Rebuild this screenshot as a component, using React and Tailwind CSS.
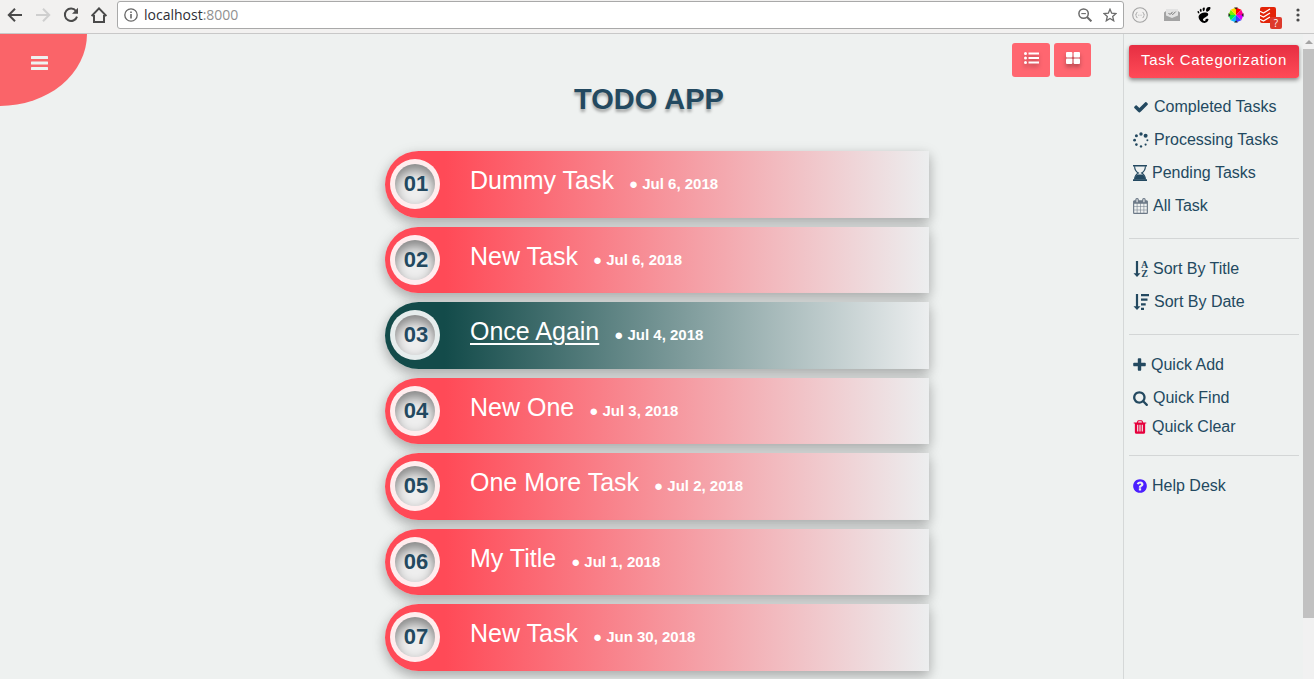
import React from "react";
import { SiGnome } from "react-icons/si";

const tasks = [
  { title: "Dummy Task", date: "Jul 6, 2018" },
  { title: "New Task", date: "Jul 6, 2018" },
  { title: "Once Again", date: "Jul 4, 2018", active: true },
  { title: "New One", date: "Jul 3, 2018" },
  { title: "One More Task", date: "Jul 2, 2018" },
  { title: "My Title", date: "Jul 1, 2018" },
  { title: "New Task", date: "Jun 30, 2018" },
];

function Glyph({ d, x = 0, w = 1792, className = "" }) {
  return (
    <svg aria-hidden="true" viewBox={`${x} 0 ${w} 1792`} className={`h-4 shrink-0 fill-current ${className}`}>
      <path d={d} />
    </svg>
  );
}

const CheckIcon = () => (
  <Glyph className="w-4" d="M1671 566q0 40-28 68l-724 724-136 136q-28 28-68 28t-68-28l-136-136-362-362q-28-28-28-68t28-68l136-136q28-28 68-28t68 28l294 295 656-657q28-28 68-28t68 28l136 136q28 28 28 68z" />
);

const SpinnerIcon = () => (
  <svg aria-hidden="true" viewBox="0 0 16 16" className="size-4 shrink-0 fill-current">
    <circle cx="8" cy="2" r="1.7" />
    <circle cx="12.6" cy="3.8" r="2" />
    <circle cx="14.4" cy="8.2" r="1" />
    <circle cx="12.6" cy="12.6" r="1.1" />
    <circle cx="8" cy="14.4" r="1.2" />
    <circle cx="3.4" cy="12.6" r="1.3" />
    <circle cx="1.6" cy="8.2" r="1.4" />
    <circle cx="3.4" cy="3.8" r="1.5" />
  </svg>
);

const HourglassIcon = () => (
  <svg aria-hidden="true" viewBox="0 0 14 16" className="h-4 w-3.5 shrink-0 fill-current">
    <path d="M0 0h14v1.5H0zM0 14.2h14v1.8H0z" />
    <path d="M1.6 1.2c0 3.6 1.6 5.6 3.8 6.8-2.2 1.2-3.8 3.2-3.8 6.6M12.4 1.2c0 3.6-1.6 5.6-3.8 6.8 2.2 1.2 3.8 3.2 3.8 6.6" className="fill-none stroke-current" strokeWidth="1.1" />
    <path d="M1.6 14.4c.2-2.1 1-3.6 2.6-5h5.6c1.600 1.400 2.400 2.900 2.600 5z" />
  </svg>
);

const CalendarIcon = () => (
  <Glyph className="w-[15px] text-[#6c7987]" x={64} w={1664} d="M192 1664h288v-288h-288v288zm352 0h320v-288h-320v288zm-352-352h288v-320h-288v320zm352 0h320v-320h-320v320zm-352-384h288v-288h-288v288zm736 736h320v-288h-320v288zm-384-736h320v-288h-320v288zm768 736h288v-288h-288v288zm-384-352h320v-320h-320v320zm-352-864v-288q0-13-9.5-22.5t-22.5-9.5h-64q-13 0-22.5 9.5t-9.5 22.5v288q0 13 9.5 22.5t22.5 9.5h64q13 0 22.5-9.5t9.5-22.5zm736 864h288v-320h-288v320zm-384-384h320v-288h-320v288zm384 0h288v-288h-288v288zm32-480v-288q0-13-9.5-22.5t-22.5-9.5h-64q-13 0-22.5 9.5t-9.5 22.5v288q0 13 9.5 22.5t22.5 9.5h64q13 0 22.5-9.5t9.5-22.5zm384-64v1280q0 52-38 90t-90 38h-1408q-52 0-90-38t-38-90v-1280q0-52 38-90t90-38h128v-96q0-66 47-113t113-47h64q66 0 113 47t47 113v96h384v-96q0-66 47-113t113-47h64q66 0 113 47t47 113v96h128q52 0 90 38t38 90z" />
);

const SortTitleIcon = () => (
  <svg aria-hidden="true" viewBox="0 0 15 16" className="h-4 w-[15px] shrink-0 overflow-visible fill-current">
    <path d="M2.9 0h2.200v12.200h2.400L4 16 .5 12.200h2.400z" />
    <text x="11.500" y="7" textAnchor="middle" className="font-['Liberation_Serif',serif] text-[10px] font-bold">A</text>
    <text x="11.500" y="16" textAnchor="middle" className="font-['Liberation_Serif',serif] text-[10px] font-bold">Z</text>
  </svg>
);

const SortDateIcon = () => (
  <svg aria-hidden="true" viewBox="0 0 16 16" className="size-4 shrink-0 fill-current">
    <path d="M2.9 0h2.200v12.200h2.400L4 16 .5 12.200h2.400zM8 0h8v2.200H8zM8 4.600h6.500v2.200H8zM8 9.200h4.700v2.200H8zM8 13.800h3V16H8z" />
  </svg>
);

const PlusIcon = () => (
  <Glyph className="w-[13px]" x={192} w={1408} d="M1600 736v192q0 40-28 68t-68 28h-416v416q0 40-28 68t-68 28h-192q-40 0-68-28t-28-68v-416h-416q-40 0-68-28t-28-68v-192q0-40 28-68t68-28h416v-416q0-40 28-68t68-28h192q40 0 68 28t28 68v416h416q40 0 68 28t28 68z" />
);

const SearchIcon = () => (
  <Glyph className="w-[15px]" x={64} w={1664} d="M1216 832q0-185-131.5-316.5t-316.5-131.5-316.5 131.5-131.5 316.5 131.5 316.5 316.5 131.5 316.5-131.5 131.5-316.5zm512 832q0 52-38 90t-90 38q-54 0-90-38l-343-342q-179 124-399 124-143 0-273.5-55.5t-225-150-150-225-55.5-273.5 55.5-273.5 150-225 225-150 273.5-55.5 273.5 55.5 225 150 150 225 55.5 273.5q0 220-124 399l343 343q37 37 37 90z" />
);

const TrashIcon = () => (
  <Glyph className="w-3.5 text-[#e6003c]" x={128} w={1536} d="M704 1376v-704q0-14-9-23t-23-9h-64q-14 0-23 9t-9 23v704q0 14 9 23t23 9h64q14 0 23-9t9-23zm256 0v-704q0-14-9-23t-23-9h-64q-14 0-23 9t-9 23v704q0 14 9 23t23 9h64q14 0 23-9t9-23zm256 0v-704q0-14-9-23t-23-9h-64q-14 0-23 9t-9 23v704q0 14 9 23t23 9h64q14 0 23-9t9-23zm-544-992h448l-48-117q-7-9-17-11h-317q-10 2-17 11zm928 32v64q0 14-9 23t-23 9h-96v948q0 83-47 143.5t-113 60.5h-832q-66 0-113-58.5t-47-141.5v-952h-96q-14 0-23-9t-9-23v-64q0-14 9-23t23-9h309l70-167q15-37 54-63t79-26h320q40 0 79 26t54 63l70 167h309q14 0 23 9t9 23z" />
);

const HelpIcon = () => (
  <Glyph className="w-3.5 text-[#4b1fff]" x={128} w={1536} d="M1024 1376v-192q0-14-9-23t-23-9h-192q-14 0-23 9t-9 23v192q0 14 9 23t23 9h192q14 0 23-9t9-23zm256-672q0-88-55.5-163t-138.5-116-170-41q-243 0-371 213-15 24 8 42l132 100q7 6 19 6 16 0 25-12 53-68 86-92 34-24 86-24 48 0 85.5 26t37.5 59q0 38-20 61t-68 45q-63 28-115.5 86.5t-52.5 125.5v36q0 14 9 23t23 9h192q14 0 23-9t9-23q0-19 21.5-49.5t54.5-49.5q32-18 49-28.5t46-35 44.5-48 28-60.5 12.5-81zm384 192q0 209-103 385.5t-279.5 279.5-385.5 103-385.5-103-279.5-279.5-103-385.5 103-385.5 279.5-279.5 385.5-103 385.5 103 279.5 279.5 103 385.5z" />
);

const groups = [
  [
    { label: "Completed Tasks", Icon: CheckIcon },
    { label: "Processing Tasks", Icon: SpinnerIcon },
    { label: "Pending Tasks", Icon: HourglassIcon },
    { label: "All Task", Icon: CalendarIcon },
  ],
  [
    { label: "Sort By Title", Icon: SortTitleIcon },
    { label: "Sort By Date", Icon: SortDateIcon },
  ],
  [
    { label: "Quick Add", Icon: PlusIcon },
    { label: "Quick Find", Icon: SearchIcon, tight: true },
    { label: "Quick Clear", Icon: TrashIcon, tight: true },
  ],
  [{ label: "Help Desk", Icon: HelpIcon }],
];

function BrowserBar() {
  return (
    <header className="flex h-[34px] shrink-0 items-center border-b border-[#c8c8c8] bg-[#f2f1f0] pr-3.5 pb-[3px]">
      <nav aria-label="Browser" className="flex items-center gap-3 pl-[7px] pr-2.5 text-[#4a4a4a]">
        <button type="button" aria-label="Back">
          <svg viewBox="0 0 16 16" className="size-4 fill-none stroke-current" strokeWidth="2"><path d="M15 8H2M8 1.8 1.8 8 8 14.2" /></svg>
        </button>
        <button type="button" aria-label="Forward" className="text-[#cfcfcf]">
          <svg viewBox="0 0 16 16" className="size-4 fill-none stroke-current" strokeWidth="2"><path d="M1 8h13M8 1.8 14.2 8 8 14.2" /></svg>
        </button>
        <button type="button" aria-label="Reload">
          <svg viewBox="0 0 16 16" className="size-4 fill-none stroke-current" strokeWidth="2"><path d="M13 4A6.2 6.2 0 1 0 14 9.6" /><path d="M15 .8v6H9z" className="fill-current stroke-none" /></svg>
        </button>
        <button type="button" aria-label="Home">
          <svg viewBox="0 0 16 16" className="size-4 fill-none stroke-current" strokeWidth="2"><path d="M.6 9 8 1.4 15.4 9M3 8v7h10V8" /></svg>
        </button>
      </nav>
      <div className="flex h-7 min-w-0 flex-1 items-center rounded-[3px] border border-[#a9a9a9] bg-white px-1.5">
        <svg aria-hidden="true" viewBox="0 0 14 14" className="size-3.5 shrink-0 fill-none stroke-[#666]" strokeWidth="1.3">
          <circle cx="7" cy="7" r="6.2" />
          <path d="M7 6v4.4M7 3.4v1.5" strokeWidth="1.6" />
        </svg>
        <span className="flex-1 pl-1.5 font-['Open_Sans',sans-serif] text-[14px] leading-5 text-[#2e2e36]" role="textbox" aria-label="Address" tabIndex={0}>
          localhost<span className="text-[#909090]">:8000</span>
        </span>
        <span className="flex gap-[11px] text-[#6b6b6b]">
          <svg aria-hidden="true" viewBox="0 0 14 14" className="size-3.5 fill-none stroke-current" strokeWidth="1.5"><circle cx="5.6" cy="5.6" r="4.7" /><path d="M3.3 5.6h4.600" strokeWidth="1.1" /><path d="m9 9 4.400 4.400" strokeWidth="2" /></svg>
          <svg aria-hidden="true" viewBox="0 0 14 14" className="size-3.5 fill-none stroke-current" strokeWidth="1.3"><path d="m7 1.200 1.700 4 4.300.4-3.300 2.800 1 4.400L7 10.500l-3.700 2.300 1-4.400L1 5.600l4.300-.4z" /></svg>
        </span>
      </div>
      <div className="flex items-center gap-4 pl-2">
        <svg aria-hidden="true" viewBox="0 0 16 16" className="size-4 fill-none stroke-[#a3a3a3]"><circle cx="8" cy="8" r="7.3" strokeWidth="1.1" /><path d="M5.4 5.4q-1 0-1 1t-.9 1.6q.9.5.9 1.6t1 1M10.6 5.4q1 0 1 1t.9 1.6q-.9.5-.9 1.6t-1 1M6.400 8.200h.9M8.600 8.200h.9" /></svg>
        <svg aria-hidden="true" viewBox="0 0 16 14" className="h-3.5 w-4"><path d="M0 4.500 2 3V1h12v2l2 1.500V13H0z" fill="#a3a3a3" /><path d="M2 1h12v6.500L8 10 2 7.500z" fill="#e2e2e2" /><path d="m4.500 5 1.500 1.500 2.700-2.700M7.500 5.400l1.200 1.200 3-3" fill="none" stroke="#777" /></svg>
        <SiGnome aria-hidden="true" className="size-4 text-black" />
        <svg aria-hidden="true" viewBox="-8 -8 16 16" className="size-4">
          <path d="M0 0V-7.500L5.300-5.300z" fill="#f00" />
          <path d="M0 0 5.300-5.300 7.500 0z" fill="#ff0090" />
          <path d="M0 0H7.500L5.300 5.300z" fill="#d400ff" />
          <path d="M0 0 5.300 5.300 0 7.500z" fill="#3c3cff" />
          <path d="M0 0V7.500L-5.300 5.300z" fill="#10b8ff" />
          <path d="M0 0-5.300 5.300-7.500 0z" fill="#00f04a" />
          <path d="M0 0H-7.500L-5.300-5.300z" fill="#7cf000" />
          <path d="M0 0-5.300-5.300 0-7.500z" fill="#ffd800" />
          <path d="M-2-7.500H2L0-5.500zM-2 7.500H2L0 5.500zM-7.500-2V2L-5.500 0zM7.500-2V2L5.500 0z" fill="#222" />
        </svg>
        <span className="relative block size-4 rounded-xs bg-[#e32408]">
          <svg aria-hidden="true" viewBox="0 0 16 16" className="size-4 fill-none stroke-white" strokeWidth="1.3"><path d="m0 4.300 3.500 1.700 6.500-4M0 8.300l3.500 1.700L10 6M0 12.300 3.500 14l6.500-4" /></svg>
          <span className="absolute top-2.5 left-2.5 h-3 w-3 rounded-xs bg-[#dd3a2c] text-center font-['Open_Sans',sans-serif] text-[10px] leading-3 text-white">?</span>
        </span>
        <button type="button" aria-label="Browser menu" className="pl-1">
          <svg viewBox="0 0 4 16" className="h-4 w-1 fill-[#4a4a4a]"><circle cx="2" cy="3" r="1.600" /><circle cx="2" cy="8" r="1.600" /><circle cx="2" cy="13" r="1.600" /></svg>
        </button>
      </div>
    </header>
  );
}

function Task({ task, index }) {
  return (
    <li
      className={`flex items-start gap-[30px] rounded-l-full pt-2 pl-[5px] odd:h-[67px] even:h-[66px] shadow-[0_5px_11px_0_rgba(0,0,0,0.18),0_4px_15px_0_rgba(0,0,0,0.15)] ${task.active ? "bg-[linear-gradient(to_right,#134b4a_11%,#eceeef)]" : "bg-[linear-gradient(to_right,#ff4a57_11%,#eceeef)]"}`}
    >
      <span className="flex size-[50px] shrink-0 items-center justify-center rounded-full bg-white/90 p-[5px]">
        <span className="flex size-full items-center justify-center rounded-full bg-[#eeeeee] pl-0.5 text-[22px] leading-6 font-bold text-[#234960] shadow-[inset_0_6px_12px_0_rgba(0,0,0,0.45)]">
          {String(index + 1).padStart(2, "0")}
        </span>
      </span>
      <div className="flex items-baseline gap-[15px] pt-1.5 text-white">
        <a href="#task" className={`text-[25px] leading-[30px] ${task.active ? "underline underline-offset-[3px] decoration-2" : ""}`}>
          {task.title}
        </a>
        <span className="text-[15px] leading-5 font-bold">● {task.date}</span>
      </div>
    </li>
  );
}

export default function App() {
  return (
    <div className="flex h-screen flex-col overflow-hidden bg-[#eef1f0] font-['Liberation_Sans',Arial,sans-serif]">
      <BrowserBar />
      <div className="flex min-h-0 flex-1">
        <main className="min-w-0 flex-1 overflow-hidden">
          <div className="grid h-[117px] grid-cols-[286px_1fr_111px] items-start">
            <button type="button" aria-label="Menu" className="flex h-[72px] w-[87px] items-center justify-center rounded-br-[100%] bg-[#fa6469] pr-2 pb-3.5">
              <svg viewBox="0 0 17 14" className="h-3.5 w-[17px] fill-[#eef1f0]">
                <rect width="17" height="3" rx=".5" />
                <rect y="5.500" width="17" height="3" rx=".5" />
                <rect y="11" width="17" height="3" rx=".5" />
              </svg>
            </button>
            <h1 className="pt-12 text-center text-[29px] leading-[34px] font-bold text-[#234960] text-shadow-[0_3px_3px_rgba(0,0,0,0.3)]">TODO APP</h1>
            <div className="flex gap-1 pt-[9px]">
              <button type="button" aria-label="List view" className="flex h-[34px] w-[38px] justify-center rounded-[3px] bg-[#ff6670] pt-[9px]">
                <svg viewBox="0 0 15 12" className="h-3 w-[15px] fill-white drop-shadow-[0_3px_2px_rgba(0,0,0,0.3)]">
                  <path d="M4.500.5H15v2H4.500zM4.500 5H15v2H4.500zM4.500 9.500H15v2H4.500z" />
                  <circle cx="1.500" cy="1.500" r="1.500" /><circle cx="1.500" cy="6" r="1.500" /><circle cx="1.500" cy="10.500" r="1.500" />
                </svg>
              </button>
              <button type="button" aria-label="Grid view" className="flex h-[34px] w-[37px] justify-center rounded-[3px] bg-[#ff6670] pt-[9px]">
                <svg viewBox="0 0 14 12" className="h-3 w-3.5 fill-white drop-shadow-[0_3px_2px_rgba(0,0,0,0.3)]">
                  <rect width="6.400" height="5.400" rx="1" /><rect x="7.600" width="6.400" height="5.400" rx="1" />
                  <rect y="6.600" width="6.400" height="5.400" rx="1" /><rect x="7.600" y="6.600" width="6.400" height="5.400" rx="1" />
                </svg>
              </button>
            </div>
          </div>
          <div className="pl-[191px]">
            <ol className="mx-auto flex max-w-[544px] flex-col gap-[9px]">
              {tasks.map((task, i) => (
                <Task key={i} task={task} index={i} />
              ))}
            </ol>
          </div>
        </main>
        <aside className="w-[180px] shrink-0 border-l border-[#d5d8d8] pt-[11px] pr-1 pl-[5px]">
          <button type="button" className="mb-[17px] block h-[33px] w-full rounded-[3px] bg-linear-to-b from-[#e62e42] to-[#ff4a57] pb-[3px] text-[15px] leading-5 tracking-wider text-white shadow-[0_2px_4px_rgba(0,0,0,0.45)]">
            Task Categorization
          </button>
          {groups.map((group, g) => (
            <React.Fragment key={g}>
              {g > 0 && <hr className="mt-[11px] mb-[18px] border-[#d3d6d6]" />}
              <ul className="flex flex-col">
                {group.map(({ label, Icon, tight }) => (
                  <li key={label} className={tight ? "mb-[5px]" : "mb-[9px]"}>
                    <a href="#filter" className="flex h-6 items-center gap-[5px] pl-1 text-[16px] leading-6 text-[#234960]">
                      <Icon />
                      {label}
                    </a>
                  </li>
                ))}
              </ul>
            </React.Fragment>
          ))}
        </aside>
        <div aria-hidden="true" className="flex w-[11px] shrink-0 flex-col items-center bg-[#f1f1f1] pt-1.5">
          <svg viewBox="0 0 8 4" className="mb-[5px] h-1 w-2 fill-[#a3a3a3]"><path d="M4 0 8 4H0z" /></svg>
          <div className="h-[89%] w-full bg-[#c1c1c1]" />
        </div>
      </div>
    </div>
  );
}
